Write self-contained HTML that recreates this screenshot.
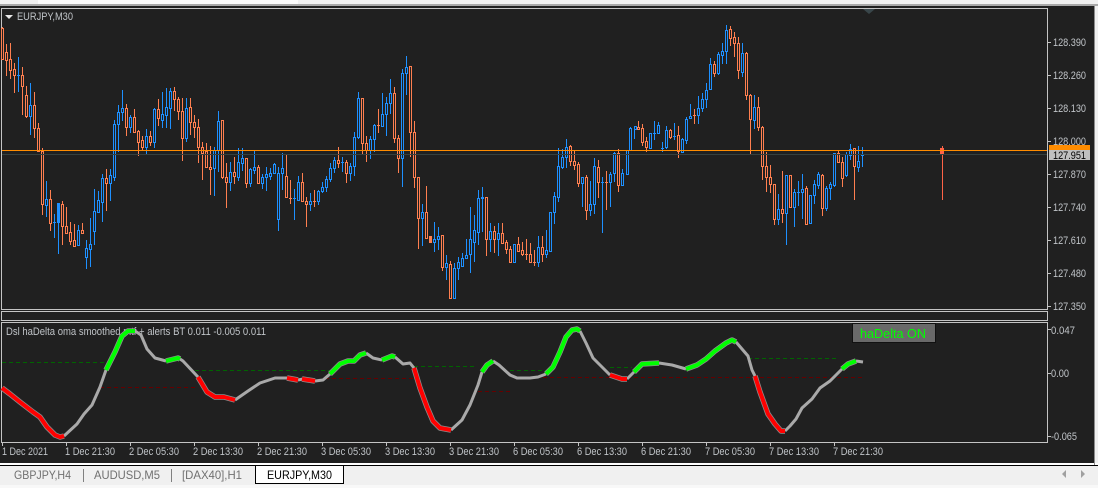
<!DOCTYPE html>
<html><head><meta charset="utf-8"><title>EURJPY,M30</title>
<style>
html,body{margin:0;padding:0;width:1098px;height:488px;overflow:hidden;background:#f0f0f0}
svg{display:block;font-family:"Liberation Sans",sans-serif}
.o,.b{fill:none;stroke-width:1;shape-rendering:crispEdges}
.o{stroke:#ff7f50}.b{stroke:#1e90ff}
.t{font-size:11px;fill:#c0c4c8}
.g,.l,.r{fill:none;stroke-linejoin:round}
.g{stroke:#a9a9a9;stroke-width:3}
.l{stroke:#0f0;stroke-width:4}
.r{stroke:#f00;stroke-width:4}
.h{fill:none;stroke:#8c8c8c;stroke-width:5.5;stroke-linejoin:round}
.f{fill:none;stroke:#c4c4c4;shape-rendering:crispEdges}
.k{stroke:#c4c4c4;shape-rendering:crispEdges}
.d{fill:none;stroke-width:1;stroke-dasharray:4 3;shape-rendering:crispEdges}
.tab{font-size:12px;fill:#707070}
</style></head><body>
<svg width="1098" height="488" viewBox="0 0 1098 488" xmlns="http://www.w3.org/2000/svg">
<rect width="1098" height="488" fill="#f0f0f0"/>
<rect x="38" y="0" width="260" height="4" fill="#fbfbfb"/>
<rect x="0" y="4" width="1098" height="2" fill="#a8a8a8"/>
<rect x="0" y="6" width="1094" height="457" fill="#202020"/>
<rect x="0" y="463" width="1098" height="2" fill="#fff"/>
<rect x="0" y="465" width="1098" height="1" fill="#000"/>
<rect x="1094" y="6" width="1" height="459" fill="#8c8c8c"/>
<rect x="0" y="485" width="1098" height="3" fill="#f8f8f8"/>

<path class="f" d="M1.5 8.5H1047.5V309.5H1.5zM1.5 311.5H1047.5V320.5H1.5zM1.5 322.5H1047.5V442.5H1.5z"/>
<path d="M863 9h12l-6 5z" fill="#39464a"/>
<path d="M5 15h8l-4 4z" fill="#e8e8e8"/>
<text x="17" y="20" class="t" textLength="56" lengthAdjust="spacingAndGlyphs">EURJPY,M30</text>

<path class="o" d="M2.5 27V28M1.5 28.5h2v31h-2zM2.5 59V60M6.5 44V52M5.5 52.5h2v8h-2zM6.5 60V76M10.5 43V59M9.5 59.5h2v11h-2zM10.5 70V79M14.5 63V69M13.5 69.5h2v6h-2zM14.5 75V93"/>
<path class="b" d="M18.5 57V92M17 75.5h3"/>
<path class="o" d="M22.5 67V75M21.5 75.5h2v11h-2zM22.5 86V115M26.5 86V95M25.5 95.5h2v21h-2zM26.5 116V118"/>
<path class="b" d="M30.5 83V105M29.5 105.5h2v11h-2zM30.5 116V135"/>
<path class="o" d="M34.5 92V105M33.5 105.5h2v23h-2zM34.5 128V138M38.5 123V128M37.5 128.5h2v23h-2zM38.5 151V152M42.5 148V151M41.5 151.5h2v53h-2zM42.5 204V215"/>
<path class="b" d="M46.5 181V199M45.5 199.5h2v6h-2zM46.5 205V217"/>
<path class="o" d="M50.5 190V199M49.5 199.5h2v24h-2zM50.5 223V231"/>
<path class="b" d="M54.5 214V238M53 222.5h3M58.5 203V254M57.5 203.5h2v19h-2z"/>
<path class="o" d="M62.5 201V204M61.5 204.5h2v22h-2zM62.5 226V245M66.5 207V226M65.5 226.5h2v7h-2zM66.5 233V234M70.5 222V232M69.5 232.5h2v9h-2zM70.5 241V245M74.5 224V240M73.5 240.5h2v6h-2zM74.5 246V247"/>
<path class="b" d="M78.5 225V230M77.5 230.5h2v15h-2zM78.5 245V246"/>
<path class="o" d="M82.5 223V230M81.5 230.5h2v3h-2z"/>
<path class="b" d="M86.5 240V248M85.5 248.5h2v9h-2zM86.5 257V269M90.5 218V244M89.5 244.5h2v5h-2zM90.5 249V267M94.5 189V211M93.5 211.5h2v20h-2zM94.5 231V245M98.5 191V200M97.5 200.5h2v12h-2zM102.5 174V178M101.5 178.5h2v24h-2zM102.5 202V222"/>
<path class="o" d="M106.5 169V178M105.5 178.5h2v5h-2zM106.5 183V211"/>
<path class="b" d="M110.5 169V175M109.5 175.5h2v8h-2zM110.5 183V201M114.5 120V124M113.5 124.5h2v53h-2zM114.5 177V181M118.5 105V112M117.5 112.5h2v12h-2zM118.5 124V152M122.5 90V108M121.5 108.5h2v4h-2zM122.5 112V121"/>
<path class="o" d="M126.5 104V108M125.5 108.5h2v19h-2zM126.5 127V136"/>
<path class="b" d="M130.5 115V117M129.5 117.5h2v10h-2zM130.5 127V133"/>
<path class="o" d="M134.5 109V117M133.5 117.5h2v15h-2zM134.5 132V133M138.5 130V131M137.5 131.5h2v11h-2zM138.5 142V156M142.5 136V140M141.5 140.5h2v7h-2zM142.5 147V150"/>
<path class="b" d="M146.5 129V136M145.5 136.5h2v11h-2zM146.5 147V155"/>
<path class="o" d="M150.5 131V136M149.5 136.5h2v6h-2zM150.5 142V146"/>
<path class="b" d="M154.5 108V109M153.5 109.5h2v33h-2zM154.5 142V148"/>
<path class="o" d="M158.5 99V109M157.5 109.5h2v9h-2zM158.5 118V126"/>
<path class="b" d="M162.5 92V114M161.5 114.5h2v6h-2zM162.5 120V128M166.5 88V107M165.5 107.5h2v8h-2zM166.5 115V128M170.5 88V91M169.5 91.5h2v17h-2zM170.5 108V129"/>
<path class="o" d="M174.5 87V91M173.5 91.5h2v8h-2zM174.5 99V111M178.5 97V99M177.5 99.5h2v12h-2zM178.5 111V120M182.5 98V111M181.5 111.5h2v27h-2zM182.5 138V161"/>
<path class="b" d="M186.5 98V108M185.5 108.5h2v30h-2zM186.5 138V142"/>
<path class="o" d="M190.5 98V107M189.5 107.5h2v15h-2zM190.5 122V135M194.5 115V122M193.5 122.5h2v5h-2zM194.5 127V138M198.5 119V127M197.5 127.5h2v20h-2zM198.5 147V163M202.5 142V147M201.5 147.5h2v6h-2zM202.5 153V180M206.5 143V151M205.5 151.5h2v16h-2zM206.5 167V168M210.5 146V167M209.5 167.5h2v2h-2zM210.5 169V195"/>
<path class="b" d="M214.5 147V150M213.5 150.5h2v18h-2zM214.5 168V196M218.5 111V121M217.5 121.5h2v29h-2zM218.5 150V172"/>
<path class="o" d="M221.5 120.5h2v57h-2zM222.5 177V179M226.5 163V177M225.5 177.5h2v5h-2zM226.5 182V208"/>
<path class="b" d="M230.5 162V172M229.5 172.5h2v10h-2zM230.5 182V191"/>
<path class="o" d="M234.5 157V172M233.5 172.5h2v4h-2zM234.5 176V184"/>
<path class="b" d="M238.5 148V162M237.5 162.5h2v15h-2zM238.5 177V181M242.5 148V158M241.5 158.5h2v5h-2zM242.5 163V171"/>
<path class="o" d="M245.5 158.5h2v25h-2zM246.5 183V188"/>
<path class="b" d="M250.5 168V169M249.5 169.5h2v14h-2zM250.5 183V187M254.5 151V167M253.5 167.5h2v3h-2zM254.5 170V174"/>
<path class="o" d="M258.5 165V167M257.5 167.5h2v16h-2z"/>
<path class="b" d="M262.5 174V177M261.5 177.5h2v6h-2zM262.5 183V189M266.5 167V174M265.5 174.5h2v3h-2zM266.5 177V191M270.5 168V173M269.5 173.5h2v3h-2zM270.5 176V180M274.5 163V164M273.5 164.5h2v9h-2zM274.5 173V174M278.5 167V173M277.5 173.5h2v46h-2zM278.5 219V231M282.5 153V168M281.5 168.5h2v5h-2zM282.5 173V190"/>
<path class="o" d="M286.5 155V176M285.5 176.5h2v21h-2zM286.5 197V198M290.5 180V204M289 198.5h3"/>
<path class="b" d="M294.5 189V220M293 198.5h3M298.5 176V182M297.5 182.5h2v18h-2zM298.5 200V201"/>
<path class="o" d="M302.5 173V182M301.5 182.5h2v19h-2zM302.5 201V202M306.5 197V201M305.5 201.5h2v3h-2zM306.5 204V227"/>
<path class="b" d="M310.5 193V201M309.5 201.5h2v3h-2zM310.5 204V211"/>
<path class="o" d="M314.5 190V207M313 201.5h3"/>
<path class="b" d="M318.5 190V191M317.5 191.5h2v10h-2zM318.5 201V205M322.5 182V187M321.5 187.5h2v4h-2zM322.5 191V193M326.5 176V179M325.5 179.5h2v8h-2zM326.5 187V192M330.5 163V168M329.5 168.5h2v11h-2zM330.5 179V182M334.5 157V160M333.5 160.5h2v8h-2zM334.5 168V173"/>
<path class="o" d="M338.5 147V160M337.5 160.5h2v3h-2zM338.5 163V168"/>
<path class="b" d="M342.5 157V172M341 162.5h3"/>
<path class="o" d="M346.5 160V162M345.5 162.5h2v11h-2zM346.5 173V183"/>
<path class="b" d="M350.5 163V166M349.5 166.5h2v7h-2zM350.5 173V181M354.5 132V137M353.5 137.5h2v29h-2zM354.5 166V176M358.5 92V98M357.5 98.5h2v39h-2zM358.5 137V139"/>
<path class="o" d="M361.5 98.5h2v45h-2zM362.5 143V155M366.5 136V143M365.5 143.5h2v7h-2zM366.5 150V162"/>
<path class="b" d="M370.5 136V139M369.5 139.5h2v11h-2zM370.5 150V159M374.5 124V125M373.5 125.5h2v14h-2zM374.5 139V152"/>
<path class="o" d="M378.5 109V125M377 125.5h3M378.5 126V133"/>
<path class="b" d="M382.5 93V114M381.5 114.5h2v12h-2zM386.5 97V103M385.5 103.5h2v11h-2zM386.5 114V136M390.5 79V93M389.5 93.5h2v10h-2zM390.5 103V114"/>
<path class="o" d="M394.5 87V93M393.5 93.5h2v45h-2zM394.5 138V143M398.5 135V138M397.5 138.5h2v20h-2zM398.5 158V173"/>
<path class="b" d="M402.5 69V73M401.5 73.5h2v85h-2zM402.5 158V187M406.5 56V67M405.5 67.5h2v6h-2zM406.5 73V95"/>
<path class="o" d="M409.5 66.5h2v66h-2zM410.5 132V157M414.5 121V132M413.5 132.5h2v45h-2zM414.5 177V188M417.5 177.5h2v41h-2zM418.5 218V249"/>
<path class="b" d="M422.5 204V212M421.5 212.5h2v6h-2zM422.5 218V246"/>
<path class="o" d="M426.5 186V212M425.5 212.5h2v26h-2zM430.5 236V242M429.5 236.5h2v6h-2z"/>
<path class="b" d="M434.5 222V239M433.5 239.5h2v3h-2zM434.5 242V252M438.5 227V236M437.5 236.5h2v3h-2zM438.5 239V250"/>
<path class="o" d="M441.5 235.5h2v32h-2zM442.5 267V271"/>
<path class="b" d="M446.5 255V263M445.5 263.5h2v4h-2zM446.5 267V280"/>
<path class="o" d="M450.5 261V264M449.5 264.5h2v34h-2z"/>
<path class="b" d="M454.5 263V268M453.5 268.5h2v30h-2zM454.5 298V299M458.5 257V262M457.5 262.5h2v6h-2zM458.5 268V280M462.5 253V258M461.5 258.5h2v8h-2zM462.5 266V267M466.5 239V255M465.5 255.5h2v3h-2zM466.5 258V259M470.5 207V239M469.5 239.5h2v15h-2zM470.5 254V273M474.5 215V230M473.5 230.5h2v12h-2zM474.5 242V262M478.5 190V198M477.5 198.5h2v34h-2zM478.5 232V245M482.5 187V197M481.5 197.5h2v1h-2zM482.5 198V232"/>
<path class="o" d="M485.5 197.5h2v42h-2zM486.5 239V256"/>
<path class="b" d="M490.5 223V231M489.5 231.5h2v8h-2zM490.5 239V252"/>
<path class="o" d="M494.5 226V231M493.5 231.5h2v8h-2zM494.5 239V253"/>
<path class="b" d="M498.5 223V233M497.5 233.5h2v6h-2zM498.5 239V256"/>
<path class="o" d="M502.5 223V233M501.5 233.5h2v10h-2zM506.5 240V242M505.5 242.5h2v7h-2zM506.5 249V254M509.5 249.5h2v13h-2zM510.5 246V249"/>
<path class="b" d="M513.5 244.5h2v18h-2z"/>
<path class="o" d="M518.5 237V244M517.5 244.5h2v7h-2zM522.5 242V250M521.5 250.5h2v4h-2zM522.5 254V256M526.5 239V260M525 254.5h3M530.5 243V254M529.5 254.5h2v8h-2zM530.5 262V263M534.5 250V266M533 262.5h3"/>
<path class="b" d="M538.5 236V247M537.5 247.5h2v15h-2zM538.5 262V267"/>
<path class="o" d="M542.5 236V247M541.5 247.5h2v7h-2zM542.5 254V262"/>
<path class="b" d="M546.5 230V250M545.5 250.5h2v4h-2zM546.5 254V258M549.5 212.5h2v39h-2zM554.5 192V196M553.5 196.5h2v16h-2zM554.5 212V224M558.5 148V166M557.5 166.5h2v31h-2zM558.5 197V202M562.5 149V157M561.5 157.5h2v10h-2zM562.5 167V169M566.5 139V147M565.5 147.5h2v10h-2zM566.5 157V168"/>
<path class="o" d="M570.5 145V146M569.5 146.5h2v15h-2zM570.5 161V166M574.5 151V161M573.5 161.5h2v4h-2zM574.5 165V170M578.5 162V164M577.5 164.5h2v19h-2zM578.5 183V187"/>
<path class="b" d="M581.5 177.5h2v6h-2zM582.5 183V207"/>
<path class="o" d="M586.5 175V177M585.5 177.5h2v33h-2zM586.5 210V220"/>
<path class="b" d="M590.5 181V204M589.5 204.5h2v6h-2zM590.5 210V216M594.5 158V166M593.5 166.5h2v38h-2zM594.5 204V214"/>
<path class="o" d="M598.5 160V167M597.5 167.5h2v15h-2zM598.5 182V198"/>
<path class="b" d="M602.5 177V233M601 182.5h3"/>
<path class="o" d="M606.5 171V210M605 182.5h3"/>
<path class="b" d="M610.5 172V174M609.5 174.5h2v8h-2zM610.5 182V207M614.5 152V153M613.5 153.5h2v20h-2zM614.5 173V182"/>
<path class="o" d="M618.5 149V153M617.5 153.5h2v32h-2zM618.5 185V192"/>
<path class="b" d="M622.5 169V173M621.5 173.5h2v12h-2zM626.5 150.5h2v24h-2zM626.5 174V175M630.5 127V128M629.5 128.5h2v22h-2zM634.5 126.5h2v3h-2zM634.5 129V139"/>
<path class="o" d="M638.5 121V127M637.5 127.5h2v2h-2zM642.5 124V128M641.5 128.5h2v14h-2zM642.5 142V146M646.5 137V141M645.5 141.5h2v6h-2zM646.5 147V152"/>
<path class="b" d="M649.5 133.5h2v15h-2zM654.5 121V140M653 133.5h3M658.5 122V125M657.5 125.5h2v8h-2zM662.5 142V152M661 148.5h3M666.5 126V130M665.5 130.5h2v17h-2zM666.5 147V149"/>
<path class="o" d="M670.5 129V130M669.5 130.5h2v7h-2zM670.5 137V139"/>
<path class="b" d="M674.5 123V140M673 136.5h3"/>
<path class="o" d="M678.5 126V135M677.5 135.5h2v16h-2zM678.5 151V158"/>
<path class="b" d="M682.5 138V139M681.5 139.5h2v13h-2zM686.5 117V119M685.5 119.5h2v21h-2zM686.5 140V144M690.5 104V116M689.5 116.5h2v2h-2zM690.5 118V119"/>
<path class="o" d="M694.5 109V124M693 115.5h3"/>
<path class="b" d="M698.5 96V108M697.5 108.5h2v7h-2zM698.5 115V124M702.5 93V99M701.5 99.5h2v9h-2zM702.5 108V112M706.5 83V90M705.5 90.5h2v9h-2zM706.5 99V108M710.5 58V64M709.5 64.5h2v25h-2z"/>
<path class="o" d="M714.5 61V64M713.5 64.5h2v9h-2zM714.5 73V77"/>
<path class="b" d="M718.5 52V54M717.5 54.5h2v19h-2zM718.5 73V75M722.5 43V51M721.5 51.5h2v4h-2zM722.5 55V64M726.5 25V30M725.5 30.5h2v21h-2zM726.5 51V64"/>
<path class="o" d="M730.5 26V29M729.5 29.5h2v9h-2zM730.5 38V46M734.5 32V37M733.5 37.5h2v6h-2zM734.5 43V57M738.5 37V43M737.5 43.5h2v27h-2zM738.5 70V79"/>
<path class="b" d="M742.5 43V53M741.5 53.5h2v19h-2zM742.5 72V77"/>
<path class="o" d="M746.5 52V53M745.5 53.5h2v42h-2zM746.5 95V100M750.5 94V95M749.5 95.5h2v24h-2zM750.5 119V154"/>
<path class="b" d="M754.5 95V107M753.5 107.5h2v13h-2zM754.5 120V129"/>
<path class="o" d="M758.5 97V107M757.5 107.5h2v20h-2zM758.5 127V131M762.5 126V127M761.5 127.5h2v39h-2zM762.5 166V180M766.5 152V166M765.5 166.5h2v11h-2zM766.5 177V192M770.5 165V177M769.5 177.5h2v7h-2zM770.5 184V193M773.5 184.5h2v35h-2zM774.5 219V225"/>
<path class="b" d="M778.5 194V209M777.5 209.5h2v10h-2zM778.5 219V225"/>
<path class="o" d="M782.5 171V209M781.5 209.5h2v4h-2zM782.5 213V223"/>
<path class="b" d="M785.5 175.5h2v38h-2zM786.5 213V245"/>
<path class="o" d="M789.5 175.5h2v32h-2z"/>
<path class="b" d="M794.5 189V192M793.5 192.5h2v15h-2zM794.5 207V227M798.5 181V206M797 192.5h3M802.5 174V189M801.5 189.5h2v3h-2zM802.5 192V219"/>
<path class="o" d="M806.5 186V188M805.5 188.5h2v36h-2zM806.5 224V225"/>
<path class="b" d="M809.5 195.5h2v28h-2zM814.5 180V184M813.5 184.5h2v11h-2zM814.5 195V204M818.5 172V174M817.5 174.5h2v11h-2zM818.5 185V189"/>
<path class="o" d="M822.5 174V175M821.5 175.5h2v33h-2zM822.5 208V216"/>
<path class="b" d="M826.5 186V188M825.5 188.5h2v20h-2zM826.5 208V211M830.5 182V184M829.5 184.5h2v4h-2zM830.5 188V200M833.5 153.5h2v32h-2zM834.5 185V187"/>
<path class="o" d="M838.5 151V153M837.5 153.5h2v9h-2zM842.5 157V162M841.5 162.5h2v16h-2zM842.5 178V187"/>
<path class="b" d="M846.5 152V154M845.5 154.5h2v21h-2zM846.5 175V177M850.5 144V149M849.5 149.5h2v6h-2zM850.5 155V160"/>
<path class="o" d="M854.5 148V149M853.5 148.5h2v18h-2zM854.5 166V200"/>
<path class="b" d="M858.5 146V161M857.5 161.5h2v6h-2zM858.5 167V172M862.5 147V167M861 155.5h3"/>
<path d="M942.5 146V200" stroke="#ff6347" fill="none" shape-rendering="crispEdges"/>
<rect x="940" y="148" width="4" height="7" fill="#ff6347"/>

<rect x="2" y="154" width="1045" height="1" fill="#35403e"/>
<rect x="2" y="150" width="1045" height="1" fill="#ff8c00"/>

<path class="k" d="M1048 42.5h3M1048 75.5h3M1048 108.5h3M1048 141.5h3M1048 174.5h3M1048 207.5h3M1048 240.5h3M1048 273.5h3M1048 306.5h3M1048 329.5h3M1048 373.5h3M1048 436.5h3"/>
<g class="t">
<text x="1053" y="46" textLength="33" lengthAdjust="spacingAndGlyphs">128.390</text>
<text x="1053" y="79" textLength="33" lengthAdjust="spacingAndGlyphs">128.260</text>
<text x="1053" y="112" textLength="33" lengthAdjust="spacingAndGlyphs">128.130</text>
<text x="1053" y="145" textLength="33" lengthAdjust="spacingAndGlyphs">128.000</text>
<text x="1053" y="178" textLength="33" lengthAdjust="spacingAndGlyphs">127.870</text>
<text x="1053" y="211" textLength="33" lengthAdjust="spacingAndGlyphs">127.740</text>
<text x="1053" y="244" textLength="33" lengthAdjust="spacingAndGlyphs">127.610</text>
<text x="1053" y="277" textLength="33" lengthAdjust="spacingAndGlyphs">127.480</text>
<text x="1053" y="310" textLength="33" lengthAdjust="spacingAndGlyphs">127.350</text>
<text x="1051" y="334" textLength="24" lengthAdjust="spacingAndGlyphs">0.047</text>
<text x="1051" y="377" textLength="18" lengthAdjust="spacingAndGlyphs">0.00</text>
<text x="1051" y="440" textLength="26" lengthAdjust="spacingAndGlyphs">-0.065</text>
</g>
<rect x="1049" y="145" width="41" height="5" fill="#ff8c00"/>
<rect x="1049" y="150" width="41" height="10" fill="#c0c0c0"/>
<text x="1053" y="159" font-size="11" fill="#000" textLength="33" lengthAdjust="spacingAndGlyphs">127.951</text>

<text x="6" y="335" class="t" textLength="260" lengthAdjust="spacingAndGlyphs">Dsl haDelta oma smoothed mtf + alerts BT 0.011 -0.005 0.011</text>

<g class="d" stroke="#006400">
<path d="M2 362.5H104M195 370.5H330M414 366.5H476M510 370.5H546M610 367.5H632M748 358.5H836"/>
</g>
<g class="d" stroke="#640000">
<path d="M100 387.5H195M325 378.5H414M478 391.5H512M515 377.5H862"/>
</g>

<g class="h">
<polyline points="2,388 10,394 20,402 33,412 40,417 47,427 55,435 60,437 64,436"/>
<polyline points="106,370 115,352 122,336 128,331 135,331"/>
<polyline points="166,361 178,358 180,359"/>
<polyline points="198,377 207,392 215,397 224,397 235,400"/>
<polyline points="287,378 298,380"/><polyline points="302,379 315,381"/>
<polyline points="330,374 340,364 348,361 354,361 360,355 366,353"/>
<polyline points="382,360 392,356 395,357"/>
<polyline points="414,368 420,388 427,407 433,421 440,428 451,430"/>
<polyline points="482,372 487,365 493,361"/>
<polyline points="546,374 553,367 560,352 566,337 572,330 577,329 580,331"/>
<polyline points="610,375 622,379 627,379"/>
<polyline points="634,372 642,364 659,363"/>
<polyline points="686,369 697,365 706,359 715,351 726,343 732,340 736,342"/>
<polyline points="755,376 760,392 768,414 775,424 781,431 785,431"/>
<polyline points="842,369 848,364 856,361"/>
</g>
<polyline class="g" points="64,436 77,424 84,414 92,405 100,387 106,370"/>
<polyline class="g" points="135,331 141,335 147,349 155,358 166,361"/>
<polyline class="g" points="180,359 183,361 198,377"/>
<polyline class="g" points="235,400 248,391 260,383 275,378 287,378"/>
<polyline class="g" points="298,380 303,379"/>
<polyline class="g" points="315,381 323,380 330,374"/>
<polyline class="g" points="366,353 373,358 382,360"/>
<polyline class="g" points="395,357 403,364 410,363 414,368"/>
<polyline class="g" points="451,430 462,420 470,405 478,385 482,372"/>
<polyline class="g" points="493,361 499,365 510,375 517,378 530,378 538,377 546,374"/>
<polyline class="g" points="580,331 586,343 593,358 599,364 610,375"/>
<polyline class="g" points="627,379 634,372"/>
<polyline class="g" points="659,363 672,365 686,369"/>
<polyline class="g" points="736,342 742,349 748,356 752,370 755,376"/>
<polyline class="g" points="785,431 790,426 796,419 802,408 812,399 820,388 830,381 842,369"/>
<polyline class="g" points="856,361 863,362"/>
<polyline class="r" points="2,388 10,394 20,402 33,412 40,417 47,427 55,435 60,437 64,436"/>
<polyline class="l" points="106,370 115,352 122,336 128,331 135,331"/>
<polyline class="l" points="166,361 178,358 180,359"/>
<polyline class="r" points="198,377 207,392 215,397 224,397 235,400"/>
<polyline class="r" points="287,378 298,380"/>
<polyline class="r" points="302,379 315,381"/>
<polyline class="l" points="330,374 340,364 348,361 354,361 360,355 366,353"/>
<polyline class="l" points="382,360 392,356 395,357"/>
<polyline class="r" points="414,368 420,388 427,407 433,421 440,428 451,430"/>
<polyline class="l" points="482,372 487,365 493,361"/>
<polyline class="l" points="546,374 553,367 560,352 566,337 572,330 577,329 580,331"/>
<polyline class="r" points="610,375 622,379 627,379"/>
<polyline class="l" points="634,372 642,364 659,363"/>
<polyline class="l" points="686,369 697,365 706,359 715,351 726,343 732,340 736,342"/>
<polyline class="r" points="755,376 760,392 768,414 775,424 781,431 785,431"/>
<polyline class="l" points="842,369 848,364 856,361"/>

<rect x="852.5" y="323.5" width="83" height="19" fill="#696969" stroke="#111" shape-rendering="crispEdges"/>
<text x="860" y="338" font-size="13" fill="#0f0" textLength="66" lengthAdjust="spacingAndGlyphs">haDelta ON</text>

<path class="k" d="M2.5 443v3M66.5 443v3M130.5 443v3M194.5 443v3M258.5 443v3M322.5 443v3M386.5 443v3M450.5 443v3M514.5 443v3M578.5 443v3M642.5 443v3M706.5 443v3M770.5 443v3M834.5 443v3"/>
<g class="t">
<text x="2" y="455" textLength="46" lengthAdjust="spacingAndGlyphs">1 Dec 2021</text>
<text x="65" y="455" textLength="50" lengthAdjust="spacingAndGlyphs">1 Dec 21:30</text>
<text x="129" y="455" textLength="50" lengthAdjust="spacingAndGlyphs">2 Dec 05:30</text>
<text x="193" y="455" textLength="50" lengthAdjust="spacingAndGlyphs">2 Dec 13:30</text>
<text x="257" y="455" textLength="50" lengthAdjust="spacingAndGlyphs">2 Dec 21:30</text>
<text x="321" y="455" textLength="50" lengthAdjust="spacingAndGlyphs">3 Dec 05:30</text>
<text x="385" y="455" textLength="50" lengthAdjust="spacingAndGlyphs">3 Dec 13:30</text>
<text x="449" y="455" textLength="50" lengthAdjust="spacingAndGlyphs">3 Dec 21:30</text>
<text x="513" y="455" textLength="50" lengthAdjust="spacingAndGlyphs">6 Dec 05:30</text>
<text x="577" y="455" textLength="50" lengthAdjust="spacingAndGlyphs">6 Dec 13:30</text>
<text x="641" y="455" textLength="50" lengthAdjust="spacingAndGlyphs">6 Dec 21:30</text>
<text x="705" y="455" textLength="50" lengthAdjust="spacingAndGlyphs">7 Dec 05:30</text>
<text x="769" y="455" textLength="50" lengthAdjust="spacingAndGlyphs">7 Dec 13:30</text>
<text x="833" y="455" textLength="50" lengthAdjust="spacingAndGlyphs">7 Dec 21:30</text>
</g>

<rect x="255.5" y="465.5" width="88" height="18" fill="#fff" stroke="#000" shape-rendering="crispEdges"/>
<rect x="256" y="463" width="87" height="2" fill="#fff"/>
<rect x="83" y="469" width="1" height="13" fill="#808080"/>
<rect x="171" y="469" width="1" height="13" fill="#808080"/>
<text x="14" y="479" class="tab" textLength="57" lengthAdjust="spacingAndGlyphs">GBPJPY,H4</text>
<text x="94" y="479" class="tab" textLength="66" lengthAdjust="spacingAndGlyphs">AUDUSD,M5</text>
<text x="182" y="479" class="tab" textLength="60" lengthAdjust="spacingAndGlyphs">[DAX40],H1</text>
<text x="267" y="479" class="tab" style="fill:#000" textLength="65" lengthAdjust="spacingAndGlyphs">EURJPY,M30</text>
<path d="M1066 470v8l-4-4z" fill="#a0a0a0"/>
<path d="M1081 470v8l4-4z" fill="#a0a0a0"/>
</svg>
</body></html>
